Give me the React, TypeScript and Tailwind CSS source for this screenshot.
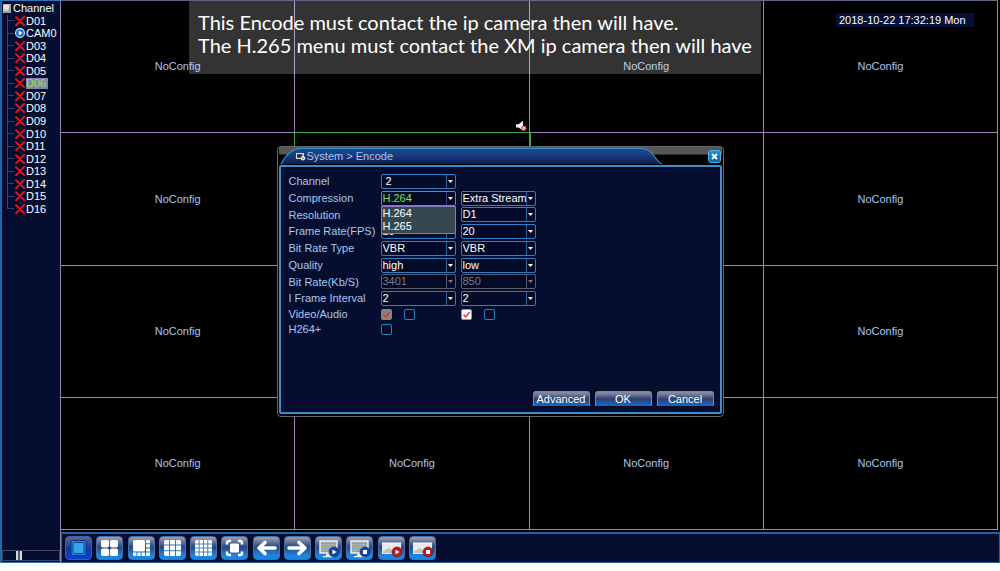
import React from "react";

const channels = [
  "D01", "CAM0", "D03", "D04", "D05", "D06", "D07", "D08",
  "D09", "D10", "D11", "D12", "D13", "D14", "D15", "D16",
];

function OfflineIcon() {
  return (
    <svg viewBox="0 0 10 10" className="size-[10px] shrink-0" aria-hidden="true">
      <path d="M1 1.2 9 9M9 .8 1 9.4" stroke="#e8121c" strokeWidth="1.9" strokeLinecap="round" />
    </svg>
  );
}

function OnlineIcon() {
  return (
    <svg viewBox="0 0 10 10" className="size-[10px] shrink-0" aria-hidden="true">
      <circle cx="5" cy="5" r="4.4" fill="#1465c8" stroke="#d6ecff" strokeWidth="1.1" />
      <path d="M3.7 2.5 7.6 5 3.7 7.5Z" fill="#fff" />
    </svg>
  );
}

function Sidebar() {
  return (
    <aside className="flex w-[61px] shrink-0 flex-col justify-between border-t border-l-2 border-r border-b border-t-[#2a78c0] border-r-[#8d84b8] border-b-[#2a78c0] border-l-[#1f66ad] bg-[#050e2e] pt-px">
      <ul className="grid h-[213px] auto-rows-fr overflow-hidden text-white">
        <li className="flex items-center gap-[2px] leading-3">
          <svg viewBox="0 0 8 9" className="ml-px h-[9px] w-2 shrink-0" aria-hidden="true">
            <rect width="8" height="9" fill="#b9b9b9" />
            <path d="M1.5 1.5h4v3h-4zM1.5 6h4" stroke="#f4f4f4" fill="#dedede" strokeWidth=".8" />
            <path d="M6.8 1v7.2H1" stroke="#777" strokeWidth=".8" fill="none" />
          </svg>
          <span>Channel</span>
        </li>
        {channels.map((name, i) => (
          <li key={name} className="flex items-stretch leading-3">
            <span className="ml-[5px] flex w-[7px] shrink-0 flex-col">
              <span className="flex-1 border-b border-l border-[#3a4058]" />
              <span className={i < 15 ? "flex-1 border-l border-[#3a4058]" : "flex-1"} />
            </span>
            <span className="flex items-center gap-px pl-px">
              {name === "CAM0" ? <OnlineIcon /> : <OfflineIcon />}
              <span className={name === "D06" ? "h-[11px] bg-[#8484b4] pr-[2px] leading-[11px] text-[#8be05a]" : ""}>
                {name}
              </span>
            </span>
          </li>
        ))}
      </ul>
      <input
        type="range"
        aria-label="Scroll channels"
        defaultValue={25}
        className="mb-px h-[11px] w-full appearance-none border border-[#3c4560] bg-transparent [&::-webkit-slider-thumb]:h-[9px] [&::-webkit-slider-thumb]:w-[6px] [&::-webkit-slider-thumb]:appearance-none [&::-webkit-slider-thumb]:border-x-2 [&::-webkit-slider-thumb]:border-[#d8d8d8] [&::-webkit-slider-thumb]:bg-[#555a70]"
      />
    </aside>
  );
}

const configured = [1];

function VideoWall() {
  return (
    <section aria-label="Live view" className="relative flex-1">
      <div className="grid h-full grid-cols-4 grid-rows-4 border-t border-[#63628a] bg-black">
        {channels.map((name, i) => (
          <div
            key={name}
            className={
              i === 5
                ? "relative flex items-center justify-center border-r border-b border-[#3aa845] text-[#a9c6f2] outline outline-offset-0 outline-[#3aa845]"
                : "relative flex items-center justify-center border-r border-b border-[#a184be] text-[#a9c6f2]"
            }
          >
            {configured.includes(i) ? (
              <svg viewBox="0 0 12 12" className="absolute right-[2px] bottom-0 size-3" aria-label="Muted">
                <path d="M1 4.2h2.5L8 .8v9.6L3.500 7.400H1z" fill="#f2f2f2" />
                <circle cx="8.800" cy="8.300" r="2.300" fill="#f6dcdc" stroke="#c33" strokeWidth=".9" />
                <path d="m7.300 6.900 3 2.900" stroke="#c33" strokeWidth=".9" />
              </svg>
            ) : (
              <span>NoConfig</span>
            )}
          </div>
        ))}
      </div>
      <p className="absolute top-px left-32 flex h-[73px] w-[572px] flex-col justify-start bg-white/20 pt-[10px] pl-[9px] font-[Lato,sans-serif] text-[20px] leading-[23px] whitespace-nowrap text-white">
        <span>This Encode must contact the ip camera then will have.</span>
        <span>The H.265 menu must contact the XM ip camera then will have</span>
      </p>
      <time className="absolute top-[13px] right-6 w-[138px] bg-[#050e34] pl-[3px] leading-[14px] whitespace-nowrap text-white">
        2018-10-22 17:32:19 Mon
      </time>
    </section>
  );
}

function Monitor() {
  return (
    <>
      <path d="M5 5h17v12H5z" fill="#a9b0ae" stroke="#f0f0f0" strokeWidth="1.400" />
      <path d="M6 7.500h15M6 10h15M6 12.500h15M6 15h15" stroke="#8c9592" strokeWidth=".7" />
      <path d="M11 18h5v2h3v1.300H8V20h3z" fill="#eee" />
    </>
  );
}

function Clip() {
  return (
    <>
      <path d="M4 7h19v11H4z" fill="#e9e9ea" />
      <path d="M5 15.500 10.500 12l4 2.500 3-1.500 5 3v1H5z" fill="#bcc0c6" />
      <path d="M4 7h19" stroke="#fff" strokeWidth="1.200" />
    </>
  );
}

const tools: { label: string; art: React.ReactNode }[] = [
  {
    label: "Single view",
    art: (
      <>
        <rect x="6" y="4.500" width="15" height="15" rx="1.500" fill="#2389df" stroke="#0a3577" strokeWidth="1" />
        <rect x="8" y="6.500" width="11" height="11" rx="1" fill="#39a2f0" stroke="#0c4a94" strokeWidth="1" />
      </>
    ),
  },
  {
    label: "4 views",
    art: (
      <g fill="#fff">
        <rect x="5" y="4" width="8" height="7.500" rx="1.800" />
        <rect x="14" y="4" width="8" height="7.500" rx="1.800" />
        <rect x="5" y="12.500" width="8" height="7.500" rx="1.800" />
        <rect x="14" y="12.500" width="8" height="7.500" rx="1.800" />
      </g>
    ),
  },
  {
    label: "8 views",
    art: (
      <g fill="#fff">
        <rect x="5" y="4" width="12" height="11.500" rx="1.500" />
        <path d="M18 5q0-1 1-1h2q1 0 1 1v2.200h-4zM18 8.200h4v3.300h-4zM18 12.500h4v3h-4zM18 16.500h4V19q0 1-1 1h-3zM13.700 16.500H17V20h-3.300zM9.400 16.500h3.300V20H9.400zM5 16.500h3.400V20H6q-1 0-1-1z" />
      </g>
    ),
  },
  {
    label: "9 views",
    art: (
      <g>
        <rect x="5" y="4" width="17" height="16" rx="2" fill="#fff" />
        <path d="M10.500 4v16M16.500 4v16M5 9h17M5 14.700h17" stroke="#3577b8" strokeWidth="1" />
      </g>
    ),
  },
  {
    label: "16 views",
    art: (
      <g>
        <rect x="5" y="4" width="17" height="16" rx="2" fill="#fff" />
        <path d="M9.200 4v16M13.500 4v16M17.800 4v16M5 8h17M5 12h17M5 16h17" stroke="#3577b8" strokeWidth=".9" />
      </g>
    ),
  },
  {
    label: "Full screen",
    art: (
      <g>
        <rect x="9" y="7.500" width="9" height="9" rx="1.500" fill="#fff" />
        <path d="M6 8.500V7q0-2 2-2h2M17 5h2q2 0 2 2v1.500M21 15.500V17q0 2-2 2h-2M10 19H8q-2 0-2-2v-1.500" fill="none" stroke="#fff" strokeWidth="2.400" />
      </g>
    ),
  },
  {
    label: "Previous",
    art: <path d="M22 12H7M12 6.500 6 12l6 5.500" fill="none" stroke="#fff" strokeWidth="3.600" strokeLinecap="round" strokeLinejoin="round" />,
  },
  {
    label: "Next",
    art: <path d="M5 12h15M15 6.500 21 12l-6 5.500" fill="none" stroke="#fff" strokeWidth="3.600" strokeLinecap="round" strokeLinejoin="round" />,
  },
  {
    label: "Start live view",
    art: (
      <>
        <Monitor />
        <circle cx="19" cy="16" r="5" fill="#14459f" stroke="#0b2b6b" strokeWidth=".6" />
        <path d="M17.500 13.500 21.500 16l-4 2.500z" fill="#fff" />
      </>
    ),
  },
  {
    label: "Stop live view",
    art: (
      <>
        <Monitor />
        <circle cx="19" cy="16" r="5" fill="#14459f" stroke="#0b2b6b" strokeWidth=".6" />
        <path d="M17 14h4v4h-4z" fill="#fff" />
      </>
    ),
  },
  {
    label: "Start recording",
    art: (
      <>
        <Clip />
        <circle cx="19" cy="16" r="5" fill="#b51a1c" stroke="#7b1113" strokeWidth=".6" />
        <path d="M17.500 13.500 21.500 16l-4 2.500z" fill="#fff" />
      </>
    ),
  },
  {
    label: "Stop recording",
    art: (
      <>
        <Clip />
        <circle cx="19" cy="16" r="5" fill="#b51a1c" stroke="#7b1113" strokeWidth=".6" />
        <path d="M17 14h4v4h-4z" fill="#fff" />
      </>
    ),
  },
];

function Toolbar() {
  return (
    <nav aria-label="View tools" className="mt-[2px] flex h-[31px] items-center border border-t-2 border-[#1e62a8] bg-[#050e2e] pl-[3px]">
      <div className="flex w-[371px] justify-between">
        {tools.map((tool, i) => (
          <button
            key={tool.label}
            aria-label={tool.label}
            className={
              i === 0
                ? "h-6 w-[27px] overflow-hidden rounded-[4px] border border-[#3d5fae] bg-linear-to-b from-[#5b6590] via-[#1338a0] to-[#0a3fd0]"
                : "h-6 w-[27px] overflow-hidden rounded-[4px] border border-[#4a6da8] bg-linear-to-b from-[#9498ab] from-5% via-[#27487e] via-45% to-[#1a86e4] to-85%"
            }
          >
            <svg viewBox="1 1 25 22" className="h-[22px] w-[25px]" aria-hidden="true">
              {tool.art}
            </svg>
          </button>
        ))}
      </div>
    </nav>
  );
}

type FieldProps = {
  label: string;
  value: string;
  tone?: "normal" | "open" | "disabled";
  indent?: boolean;
};

const boxTones = {
  normal: "border-[#2f7fc4] text-white",
  open: "border-[#8577bd] text-[#7be04f]",
  disabled: "border-[#5c5c68] text-[#7b7b86]",
};

const arrowTones = {
  normal: "border-[#24609a] text-white",
  open: "border-[#3a3f78] text-white",
  disabled: "border-[#5c5c68] text-[#7b7b86]",
};

function Select({ label, value, tone = "normal", indent = false }: FieldProps) {
  return (
    <div className={`relative flex h-[15px] w-[75px] rounded-[2px] border bg-[#040b28] ${boxTones[tone]}`}>
      <select
        aria-label={label}
        disabled={tone === "disabled"}
        className={`min-w-0 flex-1 appearance-none overflow-hidden bg-transparent leading-[13px] opacity-100 outline-none ${indent ? "pl-1" : "pl-px"}`}
      >
        <option>{value}</option>
      </select>
      <span className={`pointer-events-none flex w-[9px] shrink-0 items-center justify-center border-l ${arrowTones[tone]}`}>
        <svg viewBox="0 0 5 3" className="h-[3px] w-[5px]" aria-hidden="true">
          <path d="M0 0h5L2.500 3z" fill="currentColor" />
        </svg>
      </span>
    </div>
  );
}

function CompressionList() {
  return (
    <ul role="listbox" aria-label="Compression options" className="absolute top-full left-0 z-10 w-[75px] border border-[#8577bd] bg-[#37474f] pl-px leading-[13px] text-white">
      <li role="option" aria-selected="true">H.264</li>
      <li role="option" aria-selected="false">H.265</li>
    </ul>
  );
}

const fields: { label: string; main: string; extra?: string; disabled?: boolean }[] = [
  { label: "Channel", main: "2" },
  { label: "Compression", main: "H.264", extra: "Extra Stream" },
  { label: "Resolution", main: "1080P", extra: "D1" },
  { label: "Frame Rate(FPS)", main: "20", extra: "20" },
  { label: "Bit Rate Type", main: "VBR", extra: "VBR" },
  { label: "Quality", main: "high", extra: "low" },
  { label: "Bit Rate(Kb/S)", main: "3401", extra: "850", disabled: true },
  { label: "I Frame Interval", main: "2", extra: "2" },
];

function Check({ label, checked = false, disabled = false }: { label: string; checked?: boolean; disabled?: boolean }) {
  const look = disabled
    ? "border-[#8a8080] bg-[#8a8080]"
    : checked
      ? "border-[#5aa5dd] bg-white"
      : "border-[#2f7fc4] bg-[#040b28]";
  return (
    <span className="relative flex size-[11px]">
      <input
        type="checkbox"
        aria-label={label}
        defaultChecked={checked}
        disabled={disabled}
        className={`size-[11px] appearance-none rounded-[2px] border ${look}`}
      />
      {checked && (
        <svg viewBox="0 0 11 11" className="pointer-events-none absolute inset-0" aria-hidden="true">
          <path d="M2.500 5.500 4.700 8 8.700 3" fill="none" stroke="#d8363c" strokeWidth="1.400" />
        </svg>
      )}
    </span>
  );
}

function ActionButton({ children }: { children: string }) {
  return (
    <button className="h-[15px] w-[57px] rounded-t-[3px] border border-b-0 border-[#7d86a6] bg-linear-to-b from-[#83869d] from-10% via-[#2b3f72] via-50% to-[#1269c4] leading-[13px] text-white">
      {children}
    </button>
  );
}

function EncodeDialog() {
  return (
    <div role="dialog" aria-label="System > Encode" className="w-[447px] rounded-[4px] border border-[#6a666c] bg-black px-px pb-[2px]">
      <header className="relative flex h-[18px] items-center bg-linear-to-b from-[#565656] from-40% to-black to-45% pr-px pl-[17px]">
        <svg viewBox="0 0 386 18" className="absolute top-0 left-0 h-[18px] w-[386px]" aria-hidden="true">
          <defs>
            <linearGradient id="tab" x1="0" y1="0" x2="0" y2="1">
              <stop offset="0" stopColor="#184c92" />
              <stop offset=".5" stopColor="#17387e" />
              <stop offset="1" stopColor="#0a1d50" />
            </linearGradient>
          </defs>
          <path d="M2 17Q10 2 21 1.500H364Q370 2 375 9 380 16 383 17Z" fill="url(#tab)" />
          <path d="M2 17Q10 2 21 1.500H364Q370 2 375 9 380 16 383 17" fill="none" stroke="#3a93c8" strokeWidth="1.200" />
        </svg>
        <h1 className="relative flex flex-1 items-center gap-px text-[#a9c6f2]">
          <svg viewBox="0 0 10 9" className="h-[9px] w-[10px]" aria-hidden="true">
            <path d="M0 1h8v6H0z" fill="#d8d8d8" />
            <path d="M1 2.200h5.500v3.500H1z" fill="#252a38" />
            <circle cx="7" cy="6.300" r="2.200" fill="#eee" />
            <circle cx="7" cy="6.300" r=".8" fill="#555" />
          </svg>
          System &gt; Encode
        </h1>
        <button aria-label="Close" className="relative flex size-[13px] items-center justify-center rounded-[3px] border border-[#49b4ec] bg-linear-to-b from-[#1c8fd6] to-[#0b65ae]">
          <svg viewBox="0 0 7 7" className="size-[7px]" aria-hidden="true">
            <path d="M1 1 6 6M6 1 1 6" stroke="#fff" strokeWidth="1.800" />
          </svg>
        </button>
      </header>
      <form className="flex flex-col rounded-[2px] border-2 border-[#3d8ccc] bg-[#050e2e] pt-[6px] pr-[6px] pb-[6px] pl-2 text-[#a9c6f2]">
        <div className="grid h-[134px] auto-rows-fr">
          {fields.map((f) => (
            <div key={f.label} className="flex items-center">
              <span className="w-[92px] shrink-0 whitespace-nowrap">{f.label}</span>
              <div className="flex gap-[5px]">
                <div className="relative">
                  <Select
                    label={f.label}
                    value={f.main}
                    indent={f.label === "Channel"}
                    tone={f.disabled ? "disabled" : f.label === "Compression" ? "open" : "normal"}
                  />
                  {f.label === "Compression" && <CompressionList />}
                </div>
                {f.extra && (
                  <Select
                    label={f.label === "Compression" ? "Stream" : `${f.label}, extra stream`}
                    value={f.extra}
                    tone={f.disabled ? "disabled" : "normal"}
                  />
                )}
              </div>
            </div>
          ))}
        </div>
        <div className="flex h-[15px] items-center">
          <span className="w-[92px]">Video/Audio</span>
          <div className="flex w-20 gap-3">
            <Check label="Main stream video" checked disabled />
            <Check label="Main stream audio" />
          </div>
          <div className="flex gap-3">
            <Check label="Extra stream video" checked />
            <Check label="Extra stream audio" />
          </div>
        </div>
        <div className="flex h-[15px] items-center">
          <span className="w-[92px]">H264+</span>
          <Check label="H264+" />
        </div>
        <div className="mt-[54px] flex justify-end gap-[5px]">
          <ActionButton>Advanced</ActionButton>
          <ActionButton>OK</ActionButton>
          <ActionButton>Cancel</ActionButton>
        </div>
      </form>
    </div>
  );
}

export default function App() {
  return (
    <div className="h-screen bg-white pb-2 font-['Liberation_Sans',Arial,sans-serif] text-[11px]">
      <main className="relative flex h-full bg-black">
        <Sidebar />
        <div className="flex flex-1 flex-col">
          <div className="flex flex-1 pr-[2px]">
            <VideoWall />
          </div>
          <Toolbar />
        </div>
        <div className="pointer-events-none absolute inset-0 flex items-center justify-center">
          <div className="pointer-events-auto">
            <EncodeDialog />
          </div>
        </div>
      </main>
    </div>
  );
}
